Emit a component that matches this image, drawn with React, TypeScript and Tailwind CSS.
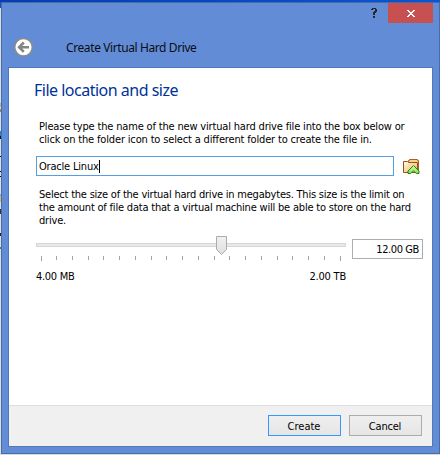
import type { ReactNode } from 'react';

const BODY = "font-['DejaVu_Sans_Condensed','DejaVu_Sans',sans-serif] font-stretch-condensed";

function Line({ children, className = 'tracking-[-0.2px]' }: { children: ReactNode; className?: string }) {
  return <span className={`block w-max whitespace-pre ${className}`}>{children}</span>;
}

function DesktopEdge() {
  return (
    <svg className="w-px h-[452px] shrink-0" viewBox="0 0 1 452" shapeRendering="crispEdges">
      <rect width="1" height="452" fill="#dcdedb" />
      <rect width="1" height="6" fill="#1252c4" />
      <rect y="101" width="1" height="4" fill="#d5ad70" />
      <rect y="107" width="1" height="3" fill="#a5845c" />
      <rect y="129" width="1" height="5" fill="#1c8cc4" />
      <rect y="134" width="1" height="3" fill="#07131d" />
      <rect y="154" width="1" height="1" fill="#000" />
      <rect y="169" width="1" height="1" fill="#000" />
      <rect y="174" width="1" height="1" fill="#000" />
      <rect y="192" width="1" height="2" fill="#58bde8" />
      <rect y="194" width="1" height="6" fill="#dfb762" />
      <rect y="207" width="1" height="5" fill="#3f3218" />
      <rect y="231" width="1" height="3" fill="#381239" />
      <rect y="245" width="1" height="2" fill="#477996" />
    </svg>
  );
}

function TitleBar() {
  return (
    <header className="h-16 shrink-0">
      <div className="flex h-[19px] justify-end">
        <svg className="mt-[5px] mr-[11px] h-[10px] w-[6px]" viewBox="0 0 6 10" shapeRendering="crispEdges" fill="#26282d">
          <path d="M1 0h4v1h1v3h-1v1h-1v2h-2v-3h1v-1h1v-2h-2v1h-2v-1h1zM2 8h2v2h-2z" />
        </svg>
        <button aria-label="Close" className="mr-[6px] flex h-5 w-[45px] shrink-0 items-center justify-center bg-[#c75050]">
          <svg className="h-[7px] w-2" viewBox="0 0 8 7" shapeRendering="crispEdges" fill="#fff">
            <path d="M0 0h2v1h1v1h2v-1h1v-1h2v1h-1v1h-1v1h-1v1h1v1h1v1h1v1h-2v-1h-1v-1h-2v1h-1v1h-2v-1h1v-1h1v-1h1v-1h-1v-1h-1v-1h-1z" />
          </svg>
        </button>
      </div>
      <div className="flex h-[45px] pt-4 pl-3">
        <svg className="h-5 w-5 shrink-0" viewBox="0 0 20 20">
          <circle cx="9.5" cy="9.2" r="8.8" fill="#fff" stroke="#8b8b8b" strokeWidth="1.5" />
          <path d="M15 9.2H6M9.8 4.5L5.100 9.2l4.700 4.700" fill="none" stroke="#858585" strokeWidth="2.5" />
        </svg>
        <Line className="ml-[32px] pt-px font-['Noto_Sans',sans-serif] text-[12px] leading-[18px] tracking-[-0.4px] text-[#0b0d15]">Create Virtual Hard Drive</Line>
      </div>
    </header>
  );
}

function FolderIcon() {
  return (
    <svg className="h-[16px] w-[18px]" viewBox="0 0 18 16">
      <defs>
        <linearGradient id="folder" x2="1" y2="1"><stop stopColor="#fffbe4" /><stop offset="1" stopColor="#edb44f" /></linearGradient>
        <linearGradient id="arrow" x2="0" y2="1"><stop stopColor="#d9ffad" /><stop offset="1" stopColor="#7be04a" /></linearGradient>
      </defs>
      <path d="M5.500 3V1.500h1v-1h8v1h1v11" fill="#f7d28d" stroke="#a8602c" />
      <path d="M.5 13.500v-11h4l1 1h9v10z" fill="url(#folder)" stroke="#9a4f20" />
      <path d="M10.500 6.500l5.500 5.500v2.500h-2.500l-3-2.500-3 2.500H5v-2.500z" fill="url(#arrow)" stroke="#2f7f20" strokeLinejoin="round" />
    </svg>
  );
}

function SizeSlider() {
  return (
    <svg className="block h-[26px] w-[310px]" viewBox="0 0 310 26">
      <defs><linearGradient id="thumb" x2="0" y2="1"><stop stopColor="#f1f1f1" /><stop offset="1" stopColor="#dedede" /></linearGradient></defs>
      <rect x=".5" y="7.500" width="309" height="3" fill="#e7eaea" stroke="#d6d6d6" />
      {Array.from({ length: 20 }, (_, i) => (
        <rect key={i} x={Math.floor(5 + i * 15.74)} y="20" width="1" height={i === 0 || i === 19 ? 5 : 4} fill="#a5a39a" />
      ))}
      <path d="M180.500.5h10v13l-5 5-5-5z" fill="url(#thumb)" stroke="#acacac" />
    </svg>
  );
}

export default function App() {
  return (
    <div className={`flex h-[455px] w-[440px] flex-col overflow-hidden bg-[#dcdedb] text-[11px] leading-[13px] text-black ${BODY}`}>
      <div className="h-[2px] shrink-0 bg-linear-to-r from-[#063db0] to-[#0b55d0]" />
      <div className="flex h-[452px] shrink-0">
        <DesktopEdge />
        <section className="flex h-[452px] w-[439px] flex-col border border-[#466da9] bg-[#628cd5]">
          <TitleBar />
          <main className="mx-[6px] flex h-[380px] shrink-0 flex-col border border-[#5077b8] bg-white">
            <div className="h-[337px] shrink-0 pl-[27px]">
              <h1 className="h-[50px] pt-[9px] font-['Noto_Sans',sans-serif] text-[16px] leading-[26px] text-[#003399]">
                <Line className="-ml-[2px] tracking-[-0.5px]">File location and size</Line>
              </h1>
              <div className="h-[38px] pl-[3px] pt-[2px]">
                <Line className="tracking-[-0.17px]">Please type the name of the new virtual hard drive file into the box below or</Line>
                <Line className="tracking-[-0.16px]">click on the folder icon to select a different folder to create the file in.</Line>
              </div>
              <div className="flex h-5">
                <div className="flex h-5 w-[358px] items-center border border-[#569de5] pt-px pl-[2px]">
                  <Line className="tracking-[-0.2px]">Oracle Linux</Line><span className="h-[13px] w-px bg-black" />
                </div>
                <div className="pt-[3px] pl-[9px]"><FolderIcon /></div>
              </div>
              <div className="h-[60px] pt-[12px] pl-[3px]">
                <Line className="tracking-[-0.22px]">Select the size of the virtual hard drive in megabytes. This size is the limit on</Line>
                <Line>the amount of file data that a virtual machine will be able to store on the hard</Line>
                <Line>drive.</Line>
              </div>
              <div className="flex h-[34px] gap-[6px]">
                <SizeSlider />
                <div className="mt-[3px] flex h-5 w-[71px] items-center justify-end border border-[#abadb3] pt-px pr-[3px]"><Line className="tracking-[-0.4px]">12.00 GB</Line></div>
              </div>
              <div className="flex w-[310px] justify-between"><Line className="tracking-[-0.3px]">4.00 MB</Line><Line>2.00 TB</Line></div>
            </div>
            <footer className="flex h-[41px] justify-end gap-2 border-t border-[#dfdfdf] bg-[#f0f0f0] pt-[9px] pr-[10px]">
              <button className="flex h-[21px] w-[73px] items-center justify-center border border-[#3399ff] bg-linear-to-b from-[#efefef] to-[#e5e5e5] pr-px pt-px"><Line className="tracking-normal">Create</Line></button>
              <button className="flex h-[21px] w-[73px] items-center justify-center border border-[#acacac] bg-linear-to-b from-[#efefef] to-[#e5e5e5] pr-px pt-px"><Line>Cancel</Line></button>
            </footer>
          </main>
        </section>
      </div>
      <div className="h-px shrink-0 bg-[#d9dcdd]" />
    </div>
  );
}
